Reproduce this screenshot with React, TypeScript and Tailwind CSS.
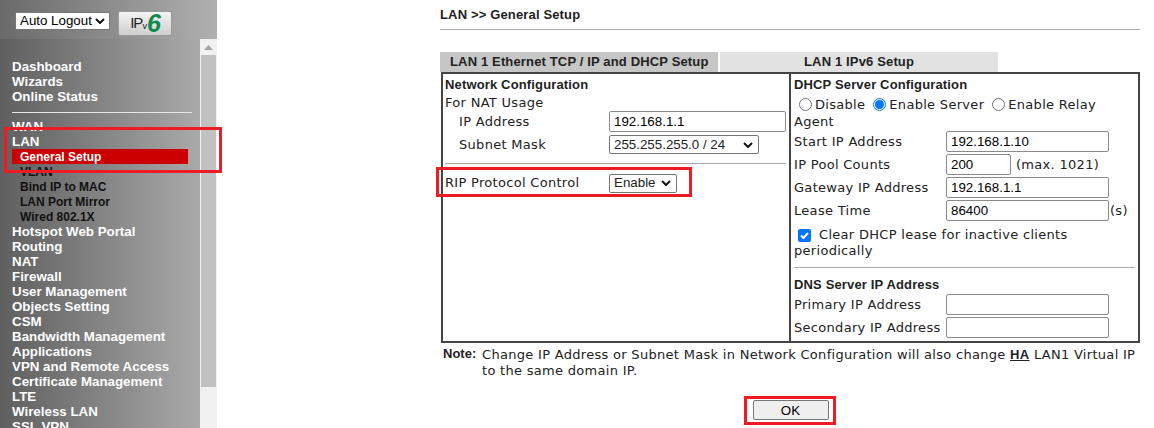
import React from "react";

const top = ["Dashboard", "Wizards", "Online Status"];
const rest = ["Hotspot Web Portal", "Routing", "NAT", "Firewall", "User Management", "Objects Setting", "CSM", "Bandwidth Management", "Applications", "VPN and Remote Access", "Certificate Management", "LTE", "Wireless LAN", "SSL VPN"];
const sub = ["Bind IP to MAC", "LAN Port Mirror", "Wired 802.1X"];

function Main({ t }: { t: string }) {
  return <div className="h-[15px] text-white">{t}</div>;
}
function Sub({ t }: { t: string }) {
  return <div className="h-[15px] pl-2 text-[#111] text-[12px] leading-[17px]">{t}</div>;
}
function Field({ value, w }: { value: string; w: string }) {
  return <input readOnly value={value} className={`${w} h-[21px] border border-[#8a8a8a] rounded-[2px] px-1 font-['Liberation_Sans',sans-serif] text-[13.33px] tracking-normal text-black bg-white outline-none`} />;
}
function Radio({ on, label }: { on?: boolean; label: string }) {
  return (
    <span className="inline-flex items-center">
      <span className={`w-[13px] h-[13px] rounded-full border flex items-center justify-center mr-[3px] ${on ? "border-[#0075ff]" : "border-[#767676]"}`}>
        {on && <span className="w-[9px] h-[9px] rounded-full bg-[#0075ff]" />}
      </span>
      {label}
    </span>
  );
}
function Arrow() {
  return <svg width="10" height="6" viewBox="0 0 10 6" className="shrink-0"><path d="M1 1l4 4 4-4" fill="none" stroke="#111" strokeWidth="2" /></svg>;
}
function Sel({ w, label }: { w: string; label: string }) {
  return (
    <div className={`${w} h-[19px] border border-[#767676] rounded-[2px] flex items-center justify-between pl-1 pr-[5px] font-['Liberation_Sans',sans-serif] text-[13.33px] tracking-normal bg-white`}>
      <span>{label}</span><Arrow />
    </div>
  );
}
function DRow({ label, children }: { label: string; children: React.ReactNode }) {
  return (
    <div className="flex items-center h-[23px]">
      <div className="w-[155px] pl-[3px] shrink-0 whitespace-nowrap">{label}</div>
      {children}
    </div>
  );
}
const head = "font-['Liberation_Sans',sans-serif] font-bold text-[13px] tracking-[0.15px] text-[#222]";

export default function App() {
  return (
    <div className="relative w-[1154px] h-[428px] overflow-hidden bg-white flex text-[13px] text-[#222] font-['DejaVu_Sans',sans-serif] tracking-[0.3px]">
      <aside className="w-[217px] h-full shrink-0 flex flex-col">
        <div className="h-[39px] shrink-0 bg-gradient-to-r from-[#6a6a6a] to-[#b0b0b0] flex items-start pl-[15px] pt-[12px] gap-2 font-['Liberation_Sans',sans-serif] tracking-normal">
          <div className="w-[95px] h-[18px] bg-white border border-[#777] flex items-center justify-between pl-1 pr-[4px] text-[13.33px] text-black whitespace-nowrap">
            <span>Auto Logout</span><Arrow />
          </div>
          <div className="w-[54px] h-[25px] -mt-px bg-gradient-to-b from-[#f4f4f4] to-[#cfcfcf] border border-[#999] rounded-[2px] flex items-center justify-center text-[15px] text-[#222] tracking-[-1px]">
            <span>IP</span><span className="text-[9px] mt-[7px]">v</span>
            <span className="text-[#0f8a4a] font-bold italic text-[25px] leading-none ml-[1px]">6</span>
          </div>
        </div>
        <div className="flex-1 flex min-h-0">
          <div className="w-[200px] bg-gradient-to-r from-[#5f5f5f] to-[#aaaaaa] pl-3 pt-5 font-['Liberation_Sans',sans-serif] font-bold text-[13.33px] leading-[15px] tracking-normal overflow-hidden">
            {top.map((t) => <Main key={t} t={t} />)}
            <div className="w-[180px] h-px bg-[#e8e8e8] mt-[8px] mb-[6px]" />
            <Main t="WAN" />
            <Main t="LAN" />
            <div className="w-[176px] h-[15px] bg-[#cc0000] text-white pl-2 text-[12px] leading-[16px]">General Setup</div>
            <Sub t="VLAN" />
            {sub.map((t) => <Sub key={t} t={t} />)}
            {rest.map((t) => <Main key={t} t={t} />)}
          </div>
          <div className="w-[17px] bg-[#f1f1f1] flex flex-col items-center">
            <svg width="9" height="5" viewBox="0 0 9 5" className="mt-[6px] mb-[5px]"><path d="M4.5 0L9 5H0z" fill="#a3a3a3" /></svg>
            <div className="w-[15px] h-[332px] bg-[#c1c1c1]" />
          </div>
        </div>
      </aside>

      <main className="pl-[223px] w-[923px] shrink-0">
        <div className={`h-[30px] border-b border-[#aaa] pt-[5px] ${head} tracking-[0.1px]`}>LAN &gt;&gt; General Setup</div>
        <div className={`flex mt-[22px] h-[20px] ${head}`}>
          <div className="w-[278px] bg-[#c6c6c6] flex items-center pl-[10px] whitespace-nowrap">LAN 1 Ethernet TCP / IP and DHCP Setup</div>
          <div className="w-[278px] ml-[2px] bg-[#e2e2e2] flex items-center pl-[84px]">LAN 1 IPv6 Setup</div>
        </div>
        <div className="ml-px w-[699px] h-[271px] border-2 border-[#444] flex">
          <section className="w-[348px] shrink-0 border-r-2 border-[#444] pl-[2px] pr-[3px] pt-[2px] leading-[16px]">
            <div className={`${head} h-[18px] leading-[17px]`}>Network Configuration</div>
            <div className="h-[18px] leading-[18px]">For NAT Usage</div>
            <div className="flex items-center h-[23px] -mt-[2px]">
              <div className="w-[164px] pl-[14px] shrink-0">IP Address</div>
              <Field value="192.168.1.1" w="w-[177px]" />
            </div>
            <div className="flex items-center h-[23px]">
              <div className="w-[164px] pl-[14px] shrink-0">Subnet Mask</div>
              <Sel w="w-[150px]" label="255.255.255.0 / 24" />
            </div>
            <div className="h-px bg-[#aaa] mt-[7px] mb-[7px]" />
            <div className="flex items-center h-[24px]">
              <div className="w-[164px] shrink-0 whitespace-nowrap">RIP Protocol Control</div>
              <Sel w="w-[68px]" label="Enable" />
            </div>
          </section>
          <section className="flex-1 pt-[2px] leading-[16px]">
            <div className={`${head} h-[18px] leading-[17px] pl-[3px]`}>DHCP Server Configuration</div>
            <div className="h-[21px] flex items-center gap-[8px] pl-[8px] whitespace-nowrap">
              <Radio label="Disable" /><Radio on label="Enable Server" /><Radio label="Enable Relay" />
            </div>
            <div className="pl-[3px] -mt-px">Agent</div>
            <DRow label="Start IP Address"><Field value="192.168.1.10" w="w-[163px]" /></DRow>
            <DRow label="IP Pool Counts"><Field value="200" w="w-[65px]" /><span className="ml-[5px] whitespace-nowrap">(max. 1021)</span></DRow>
            <DRow label="Gateway IP Address"><Field value="192.168.1.1" w="w-[163px]" /></DRow>
            <DRow label="Lease Time"><Field value="86400" w="w-[163px]" /><span className="ml-px">(s)</span></DRow>
            <div className="pl-[3px] mt-[5px]">
              <div className="flex items-center h-[16px] pl-[4px] whitespace-nowrap">
                <span className="w-[13px] h-[13px] bg-[#0075ff] rounded-[2px] flex items-center justify-center mr-[8px]">
                  <svg width="11" height="11" viewBox="0 0 11 11"><path d="M2 5.5l2.5 2.5L9 3" fill="none" stroke="#fff" strokeWidth="2" /></svg>
                </span>
                Clear DHCP lease for inactive clients
              </div>
              <div>periodically</div>
            </div>
            <div className="h-px bg-[#aaa] mx-[3px] mt-[8px] mb-[8px]" />
            <div className={`${head} h-[17px] leading-[17px] pl-[3px]`}>DNS Server IP Address</div>
            <DRow label="Primary IP Address"><Field value="" w="w-[163px]" /></DRow>
            <DRow label="Secondary IP Address"><Field value="" w="w-[163px]" /></DRow>
          </section>
        </div>
        <div className="flex mt-[4px] pl-[3px] leading-[16px]">
          <div className={`w-[39px] shrink-0 ${head} tracking-normal -mt-px`}>Note:</div>
          <div className="w-[664px]">Change IP Address or Subnet Mask in Network Configuration will also change <span className="font-bold underline font-['Liberation_Sans',sans-serif]">HA</span> LAN1 Virtual IP to the same domain IP.</div>
        </div>
        <div className="flex justify-center w-[699px] ml-px mt-[21px]">
          <button className="w-[76px] h-[20px] bg-[#efefef] border border-[#767676] rounded-[2px] font-['Liberation_Sans',sans-serif] text-[13.33px] tracking-normal text-black">OK</button>
        </div>
      </main>

      <div className="absolute left-[4px] top-[127px] w-[218px] h-[46px] border-[3px] border-[#ed1c24]" />
      <div className="absolute left-[436px] top-[167px] w-[256px] h-[30px] border-[3px] border-[#ed1c24]" />
      <div className="absolute left-[744px] top-[396px] w-[92px] h-[29px] border-[3px] border-[#ed1c24]" />
    </div>
  );
}
